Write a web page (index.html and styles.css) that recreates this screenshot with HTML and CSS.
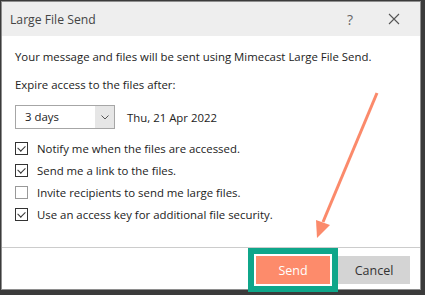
FILE: index.html
```html
<!DOCTYPE html>
<html lang="en">
<head>
    <meta charset="UTF-8">
    <title>Large File Send</title>
    <link rel="stylesheet" href="styles.css">
</head>
<body>
    <div class="dialog">
        <header class="title-bar">
            <span class="title">Large File Send</span>
            <span class="title-btn help">?</span>
            <span class="title-btn close">
                <svg width="12" height="12" viewBox="0 0 12 12"><path d="M1 1 L11 11 M11 1 L1 11" stroke="#555" stroke-width="1.1" fill="none"/></svg>
            </span>
        </header>

        <div class="content">
            <p class="intro">Your message and files will be sent using Mimecast Large File Send.</p>
            <p class="label">Expire access to the files after:</p>

            <div class="expire-row">
                <div class="select">
                    <span class="select-value">3 days</span>
                    <span class="select-arrow">
                        <svg width="8" height="5" viewBox="0 0 8 5"><path d="M0.5 0.5 L4 4 L7.5 0.5" stroke="#555" stroke-width="1" fill="none"/></svg>
                    </span>
                </div>
                <span class="date">Thu, 21 Apr 2022</span>
            </div>

            <ul class="options">
                <li><span class="check checked"></span>Notify me when the files are accessed.</li>
                <li><span class="check checked"></span>Send me a link to the files.</li>
                <li><span class="check"></span>Invite recipients to send me large files.</li>
                <li><span class="check checked"></span>Use an access key for additional file security.</li>
            </ul>
        </div>

        <footer class="actions">
            <button class="btn btn-send">Send</button>
            <button class="btn btn-cancel">Cancel</button>
        </footer>
    </div>

    <!-- flecha de anotación -->
    <svg class="annotation" width="425" height="295" viewBox="0 0 425 295">
        <line x1="377" y1="93" x2="323" y2="222" stroke="#fb8a6b" stroke-width="3"/>
        <polygon points="317,238 316,220 330,225" fill="#fb8a6b"/>
    </svg>
</body>
</html>
```

FILE: styles.css
```css
body {
    margin: 0;
    padding: 1px 4px 3px 1px;
    background-color: #3b3b3b;
    font-family: "Open Sans", "Noto Sans", sans-serif;
    font-size: 11.4px;
    color: #222;
}

.dialog {
    background-color: #fff;
    border: 1px solid #8e8e8e;
    height: 289px;
    box-sizing: border-box;
    display: flex;
    flex-direction: column;
}

.title-bar {
    display: flex;
    align-items: center;
    height: 34px;
    background-color: #eeeeee;
    padding-left: 8px;
    flex-shrink: 0;
}

.title {
    flex: 1;
    font-size: 12.2px;
    color: #444;
}

.title-btn {
    width: 44px;
    display: flex;
    justify-content: center;
    align-items: center;
    color: #666;
    font-size: 14px;
}

.help {
    margin-right: 0;
}

.close {
    width: 44px;
    margin-right: 4px;
}

.content {
    padding: 0 13px;
    flex: 1;
}

.content p {
    margin: 0;
}

.intro {
    margin-top: 13px !important;
}

.label {
    margin-top: 13px !important;
}

.expire-row {
    display: flex;
    align-items: center;
    margin-top: 13px;
}

.select {
    display: flex;
    width: 100px;
    height: 24px;
    box-sizing: border-box;
    border: 1px solid #a6a6a6;
}

.select-value {
    flex: 1;
    padding-left: 9px;
    line-height: 22px;
}

.select-arrow {
    width: 19px;
    background-color: #e6e6e6;
    display: flex;
    align-items: center;
    justify-content: center;
}

.date {
    margin-left: 12px;
}

.options {
    list-style: none;
    margin: 8px 0 0;
    padding: 0;
}

.options li {
    display: flex;
    align-items: center;
    height: 22px;
}

.check {
    width: 13px;
    height: 13px;
    box-sizing: border-box;
    border: 1px solid #999;
    margin-right: 9px;
    position: relative;
}

.check.checked {
    border-color: #333;
}

.check.checked::after {
    content: "";
    position: absolute;
    left: 3px;
    top: 1px;
    width: 4px;
    height: 6px;
    border-right: 1.5px solid #333;
    border-bottom: 1.5px solid #333;
    transform: rotate(45deg);
}

.actions {
    border-top: 1px solid #cccccc;
    display: flex;
    justify-content: flex-end;
    gap: 8px;
    padding: 8px 10px 0 0;
    height: 42px;
    box-sizing: border-box;
    flex-shrink: 0;
}

.btn {
    height: 28px;
    border: none;
    font-family: inherit;
    font-size: 12.5px;
    cursor: pointer;
}

.btn-send {
    width: 74px;
    background-color: #fd8b6b;
    color: #fff;
    box-shadow: 0 0 0 2px #fff, 0 0 0 8px #0fa68a;
}

.btn-cancel {
    width: 72px;
    background-color: #d4d4d4;
    color: #333;
}

.annotation {
    position: absolute;
    left: 0;
    top: 0;
    pointer-events: none;
}
```
